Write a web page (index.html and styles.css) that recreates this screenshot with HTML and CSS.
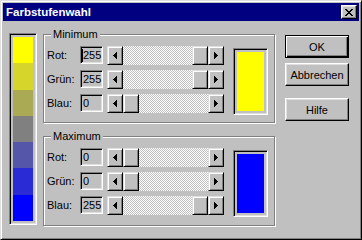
FILE: index.html
```html
<!DOCTYPE html>
<html lang="de">
<head>
  <meta charset="UTF-8" />
  <title>Farbstufenwahl</title>
  <link rel="stylesheet" href="styles.css">
</head>
<body>
  <div class="window">
    <div class="titlebar">
      <span class="title">Farbstufenwahl</span>
      <button class="close" aria-label="Schließen">
        <svg width="8" height="7" viewBox="0 0 8 7" shape-rendering="crispEdges"><path d="M0 0h2v1h-2z M6 0h2v1h-2z M1 1h2v1h-2z M5 1h2v1h-2z M2 2h4v1h-4z M3 3h2v1h-2z M2 4h4v1h-4z M1 5h2v1h-2z M5 5h2v1h-2z M0 6h2v1h-2z M6 6h2v1h-2z" fill="#000"/></svg>
      </button>
    </div>

    <div class="content">
      <div class="strip">
        <div class="band band-1"></div>
        <div class="band band-2"></div>
        <div class="band band-3"></div>
        <div class="band band-4"></div>
        <div class="band band-5"></div>
        <div class="band band-6"></div>
        <div class="band band-7"></div>
      </div>

      <div class="groups">
        <div class="group">
          <span class="legend">Minimum</span>
          <div class="rows">
            <div class="row">
              <span class="label">Rot:</span>
              <span class="field"><span class="caret"></span>255</span>
              <div class="scroll">
                <span class="arrow"><svg width="4" height="7" viewBox="0 0 4 7" shape-rendering="crispEdges"><path d="M3 0h1v7h-1z M2 1h1v5h-1z M1 2h1v3h-1z M0 3h1v1h-1z"/></svg></span>
                <span class="track end"><span class="thumb"></span></span>
                <span class="arrow"><svg width="4" height="7" viewBox="0 0 4 7" shape-rendering="crispEdges"><path d="M0 0h1v7h-1z M1 1h1v5h-1z M2 2h1v3h-1z M3 3h1v1h-1z"/></svg></span>
              </div>
            </div>
            <div class="row">
              <span class="label">Grün:</span>
              <span class="field">255</span>
              <div class="scroll">
                <span class="arrow"><svg width="4" height="7" viewBox="0 0 4 7" shape-rendering="crispEdges"><path d="M3 0h1v7h-1z M2 1h1v5h-1z M1 2h1v3h-1z M0 3h1v1h-1z"/></svg></span>
                <span class="track end"><span class="thumb"></span></span>
                <span class="arrow"><svg width="4" height="7" viewBox="0 0 4 7" shape-rendering="crispEdges"><path d="M0 0h1v7h-1z M1 1h1v5h-1z M2 2h1v3h-1z M3 3h1v1h-1z"/></svg></span>
              </div>
            </div>
            <div class="row">
              <span class="label">Blau:</span>
              <span class="field">0</span>
              <div class="scroll">
                <span class="arrow"><svg width="4" height="7" viewBox="0 0 4 7" shape-rendering="crispEdges"><path d="M3 0h1v7h-1z M2 1h1v5h-1z M1 2h1v3h-1z M0 3h1v1h-1z"/></svg></span>
                <span class="track"><span class="thumb"></span></span>
                <span class="arrow"><svg width="4" height="7" viewBox="0 0 4 7" shape-rendering="crispEdges"><path d="M0 0h1v7h-1z M1 1h1v5h-1z M2 2h1v3h-1z M3 3h1v1h-1z"/></svg></span>
              </div>
            </div>
          </div>
          <div class="preview"><div class="swatch swatch-yellow"></div></div>
        </div>

        <div class="group group-max">
          <span class="legend">Maximum</span>
          <div class="rows">
            <div class="row">
              <span class="label">Rot:</span>
              <span class="field">0</span>
              <div class="scroll">
                <span class="arrow"><svg width="4" height="7" viewBox="0 0 4 7" shape-rendering="crispEdges"><path d="M3 0h1v7h-1z M2 1h1v5h-1z M1 2h1v3h-1z M0 3h1v1h-1z"/></svg></span>
                <span class="track"><span class="thumb"></span></span>
                <span class="arrow"><svg width="4" height="7" viewBox="0 0 4 7" shape-rendering="crispEdges"><path d="M0 0h1v7h-1z M1 1h1v5h-1z M2 2h1v3h-1z M3 3h1v1h-1z"/></svg></span>
              </div>
            </div>
            <div class="row">
              <span class="label">Grün:</span>
              <span class="field">0</span>
              <div class="scroll">
                <span class="arrow"><svg width="4" height="7" viewBox="0 0 4 7" shape-rendering="crispEdges"><path d="M3 0h1v7h-1z M2 1h1v5h-1z M1 2h1v3h-1z M0 3h1v1h-1z"/></svg></span>
                <span class="track"><span class="thumb"></span></span>
                <span class="arrow"><svg width="4" height="7" viewBox="0 0 4 7" shape-rendering="crispEdges"><path d="M0 0h1v7h-1z M1 1h1v5h-1z M2 2h1v3h-1z M3 3h1v1h-1z"/></svg></span>
              </div>
            </div>
            <div class="row">
              <span class="label">Blau:</span>
              <span class="field">255</span>
              <div class="scroll">
                <span class="arrow"><svg width="4" height="7" viewBox="0 0 4 7" shape-rendering="crispEdges"><path d="M3 0h1v7h-1z M2 1h1v5h-1z M1 2h1v3h-1z M0 3h1v1h-1z"/></svg></span>
                <span class="track end"><span class="thumb"></span></span>
                <span class="arrow"><svg width="4" height="7" viewBox="0 0 4 7" shape-rendering="crispEdges"><path d="M0 0h1v7h-1z M1 1h1v5h-1z M2 2h1v3h-1z M3 3h1v1h-1z"/></svg></span>
              </div>
            </div>
          </div>
          <div class="preview"><div class="swatch swatch-blue"></div></div>
        </div>
      </div>

      <div class="buttons">
        <button class="btn btn-default">OK</button>
        <button class="btn">Abbrechen</button>
        <button class="btn btn-help">Hilfe</button>
      </div>
    </div>
  </div>
</body>
</html>
```

FILE: styles.css
```css
body {
  margin: 0;
  background: #c0c0c0;
  font-family: "Liberation Sans", Arial, sans-serif;
  font-size: 11px;
  color: #000;
}

.window {
  width: 362px;
  height: 240px;
  box-sizing: border-box;
  padding: 2px;
  border: 1px solid;
  border-color: #dfdfdf #000 #000 #dfdfdf;
  box-shadow: inset 1px 1px #fff, inset -1px -1px #808080;
  background: #c0c0c0;
}

.titlebar {
  height: 18px;
  background: #000080;
  display: flex;
  align-items: center;
  justify-content: space-between;
  padding: 0 2px 0 3px;
}

.title {
  color: #fff;
  font-weight: bold;
  font-size: 11.5px;
}

.close {
  width: 16px;
  height: 14px;
  padding: 0;
  box-sizing: border-box;
  border: 1px solid;
  border-color: #fff #000 #000 #fff;
  box-shadow: inset -1px -1px #808080, inset 1px 1px #dfdfdf;
  background: #c0c0c0;
  display: flex;
  align-items: center;
  justify-content: center;
}

.content {
  display: flex;
  align-items: flex-start;
  padding: 12px 0 0 6px;
}

/* sunken frames */
.strip,
.field,
.preview {
  box-sizing: border-box;
  border: 1px solid;
  border-color: #808080 #fff #fff #808080;
  box-shadow: inset 1px 1px #000, inset -1px -1px #dfdfdf;
}

.strip {
  width: 28px;
  height: 192px;
  padding: 3px;
  display: flex;
  flex-direction: column;
}

.band { flex: 1; }
.band-1 { background: #ffff00; }
.band-2 { background: #d5d52b; }
.band-3 { background: #aaaa55; }
.band-4 { background: #808080; }
.band-5 { background: #5555aa; }
.band-6 { background: #2b2bd5; }
.band-7 { background: #0000ff; }

.groups {
  margin: 1px 0 0 6px;
  display: flex;
  flex-direction: column;
  gap: 13px;
}

.group {
  position: relative;
  width: 232px;
  height: 89px;
  box-sizing: border-box;
  border: 1px solid #808080;
  box-shadow: inset 1px 1px #fff, 1px 1px #fff;
  display: flex;
  align-items: flex-start;
  padding: 11px 0 0 3px;
}

.group-max {
  height: 90px;
}

.legend {
  position: absolute;
  top: -7px;
  left: 7px;
  padding: 0 2px;
  background: #c0c0c0;
  line-height: 13px;
}

.rows {
  display: flex;
  flex-direction: column;
  gap: 5px;
}

.row {
  display: flex;
  align-items: flex-start;
  height: 19px;
}

.label {
  width: 33px;
  line-height: 18px;
}

.field {
  width: 23px;
  height: 18px;
  padding-left: 2px;
  display: flex;
  align-items: center;
}

.caret {
  width: 1px;
  height: 13px;
  background: #000;
  margin-left: -1px;
}

.scroll {
  display: flex;
  width: 117px;
  height: 19px;
  margin-left: 4px;
}

.arrow,
.thumb {
  width: 16px;
  height: 19px;
  box-sizing: border-box;
  border: 1px solid;
  border-color: #dfdfdf #000 #000 #dfdfdf;
  box-shadow: inset 1px 1px #fff, inset -1px -1px #808080;
  background: #c0c0c0;
  display: flex;
  align-items: center;
  justify-content: center;
}

.track {
  flex: 1;
  display: flex;
  background: repeating-conic-gradient(#c0c0c0 0 25%, #fff 0 50%) 0 0 / 2px 2px;
}

.track.end {
  justify-content: flex-end;
}

.preview {
  width: 35px;
  height: 67px;
  margin: 2px 0 0 9px;
  padding: 3px;
}

.swatch { height: 100%; }
.swatch-yellow { background: #ffff00; }
.swatch-blue { background: #0000ff; }

.buttons {
  display: flex;
  flex-direction: column;
  margin: 2px 0 0 10px;
}

.btn {
  width: 64px;
  height: 23px;
  margin-bottom: 5px;
  padding: 0;
  box-sizing: border-box;
  border: 1px solid;
  border-color: #fff #000 #000 #fff;
  box-shadow: inset -1px -1px #808080, inset 1px 1px #dfdfdf;
  background: #c0c0c0;
  font-family: inherit;
  font-size: 11px;
  color: #000;
}

.btn-default {
  border-color: #000;
  box-shadow: inset 1px 1px #fff, inset -1px -1px #000, inset -2px -2px #808080;
}

.btn-help {
  margin-top: 7px;
}
```
